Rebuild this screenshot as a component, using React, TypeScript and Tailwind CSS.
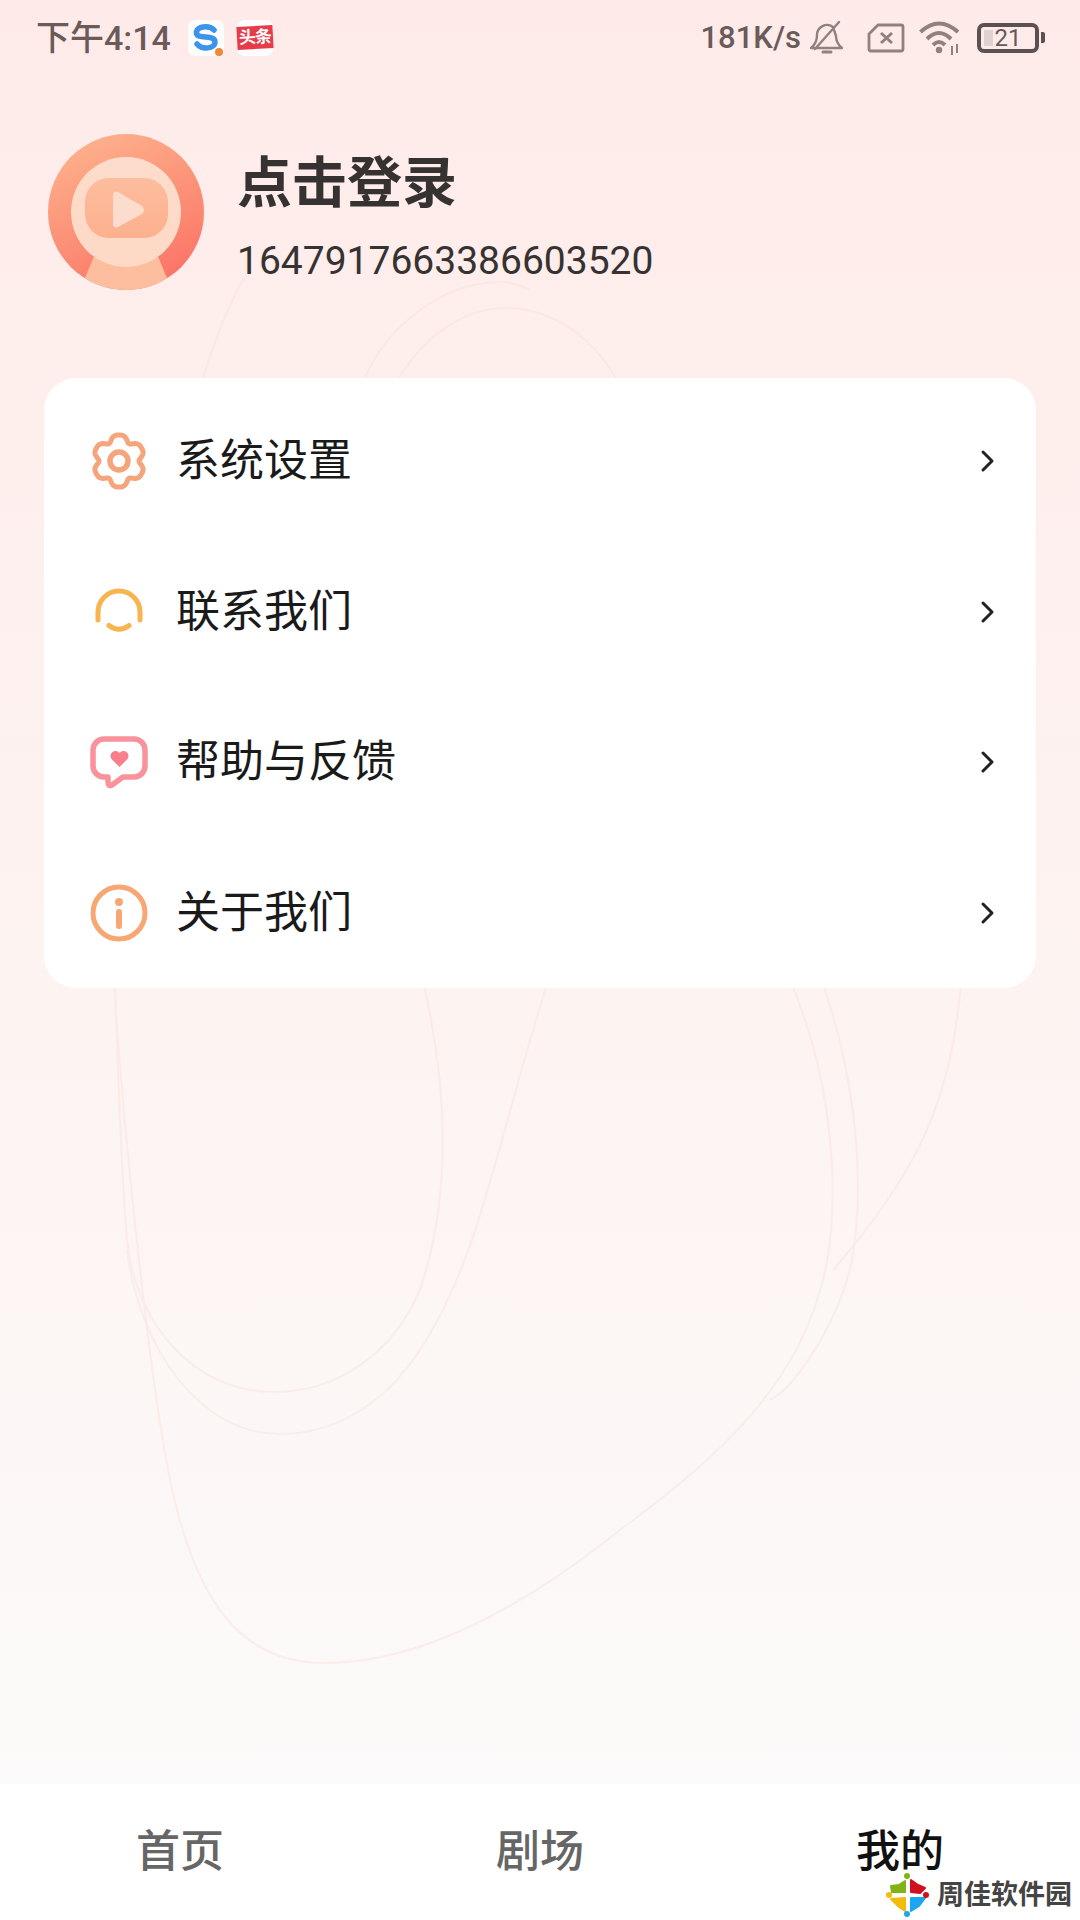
import React from "react";

const menuItems = [
  { label: "系统设置", icon: <GearIcon /> },
  { label: "联系我们", icon: <ServiceIcon /> },
  { label: "帮助与反馈", icon: <ChatHeartIcon /> },
  { label: "关于我们", icon: <InfoIcon /> },
];

// six lobed outline for the settings icon: wide lobes, narrow dents
function flowerPath() {
  const pts: string[] = [];
  for (let i = 0; i < 180; i++) {
    const a = (i / 180) * Math.PI * 2;
    const dent = (1 + Math.cos(6 * a)) / 2;
    const r = 26 - 6 * dent * dent;
    pts.push(`${(30 + r * Math.cos(a)).toFixed(2)} ${(30 + r * Math.sin(a)).toFixed(2)}`);
  }
  return "M" + pts.join("L") + "Z";
}

function GearIcon() {
  return (
    <svg width="60" height="60" viewBox="0 0 60 60" fill="none" stroke="#f5a47c" strokeWidth="5">
      <path d={flowerPath()} strokeLinejoin="round" />
      <circle cx="30" cy="30" r="9" strokeWidth="5.5" />
    </svg>
  );
}

function ServiceIcon() {
  return (
    <svg width="60" height="60" viewBox="0 0 60 60" fill="none" stroke="#f7b44f" strokeWidth="5" strokeLinecap="round">
      <path d="M9 38 V30 A21 21 0 0 1 51 30 V38" />
      <path d="M20 43.5 Q30 51 40 43.5" />
    </svg>
  );
}

function ChatHeartIcon() {
  return (
    <svg width="60" height="60" viewBox="0 0 60 60" fill="none">
      <path
        d="M15 7 H45 A11 11 0 0 1 56 18 V34 A11 11 0 0 1 45 45 H34 L23 53 Q19 55 19 50 V45 H15 A11 11 0 0 1 4 34 V18 A11 11 0 0 1 15 7 Z"
        stroke="#f9929b"
        strokeWidth="5.5"
        strokeLinejoin="round"
      />
      <path d="M30.5 35 L22.5 27 A5 5 0 0 1 30.5 21 A5 5 0 0 1 38.5 27 Z" fill="#f97f8b" />
    </svg>
  );
}

function InfoIcon() {
  return (
    <svg width="60" height="60" viewBox="0 0 60 60" fill="none" stroke="#f6a773">
      <circle cx="30" cy="30" r="26" strokeWidth="5" />
      <circle cx="30" cy="19" r="4" fill="#f6a773" stroke="none" />
      <path d="M30 29 V43" strokeWidth="6" strokeLinecap="round" />
    </svg>
  );
}

function Chevron() {
  return (
    <svg width="16" height="26" viewBox="0 0 16 26" fill="none" stroke="#222" strokeWidth="3" strokeLinecap="round" strokeLinejoin="round">
      <path d="M3 4 L12 13 L3 22" />
    </svg>
  );
}

function Avatar() {
  return (
    <svg width="156" height="156" viewBox="0 0 156 156">
      <defs>
        <linearGradient id="ring" x1="0.3" y1="0" x2="0.75" y2="1">
          <stop offset="0" stopColor="#fdb08c" />
          <stop offset="1" stopColor="#fb7264" />
        </linearGradient>
        <linearGradient id="head" x1="0" y1="0" x2="0" y2="1">
          <stop offset="0" stopColor="#fddccb" />
          <stop offset="1" stopColor="#fdd9c6" />
        </linearGradient>
        <linearGradient id="face" x1="0" y1="0" x2="0" y2="1">
          <stop offset="0" stopColor="#fdbd9f" />
          <stop offset="1" stopColor="#fdb08e" />
        </linearGradient>
        <clipPath id="disc">
          <circle cx="78" cy="78" r="78" />
        </clipPath>
      </defs>
      <circle cx="78" cy="78" r="78" fill="url(#ring)" />
      <g clipPath="url(#disc)">
        <path d="M47 120 H109 L124 156 H32 Z" fill="#fdbd9f" />
      </g>
      <circle cx="78" cy="78" r="55" fill="url(#head)" />
      <rect x="37" y="44" width="83" height="60" rx="24" fill="url(#face)" />
      <path d="M65 62 Q65 56 70 58 L94 72 Q98 76 94 80 L70 93 Q65 95 65 90 Z" fill="#fbdccd" />
    </svg>
  );
}

function SogouIcon() {
  return (
    <svg width="38" height="38" viewBox="0 0 38 38" fill="none">
      <rect x="1" y="1" width="36" height="36" rx="7" fill="#fdfdfd" />
      <path d="M27 11 C22 6 9 7 9.5 14 C10 21 28 15 28 23 C28 30 15 31 10 25" stroke="#3b93ea" strokeWidth="5.5" strokeLinecap="round" />
      <circle cx="32" cy="33" r="4" fill="#ec8a3c" />
    </svg>
  );
}

function BellOff() {
  return (
    <svg width="36" height="36" viewBox="0 0 36 36" fill="none" stroke="#92807f" strokeWidth="2.4" strokeLinecap="round" strokeLinejoin="round">
      <path d="M2 28 Q8 23 8 15 A10 10 0 0 1 24 7 L27 16 Q27 23 33 28 Z" />
      <path d="M6 29 L30 2" />
      <path d="M14 32 H22" strokeWidth="3" />
    </svg>
  );
}

function SimOff() {
  return (
    <svg width="38" height="30" viewBox="0 0 38 30" fill="none" stroke="#92807f" strokeWidth="2.8" strokeLinejoin="round">
      <path d="M11 2 H34 A2 2 0 0 1 36 4 V26 A2 2 0 0 1 34 28 H4 A2 2 0 0 1 2 26 V11 Z" />
      <path d="M14 10 L25 20 M25 10 L14 20" strokeWidth="3" />
    </svg>
  );
}

function Wifi() {
  return (
    <svg width="44" height="36" viewBox="0 0 44 36" fill="none" stroke="#92807f" strokeWidth="4">
      <path d="M1.5 12 Q20 -5 39 12" />
      <path d="M8 19 Q20 7 32 19" />
      <path d="M14 25 Q20 19 26 25" />
      <circle cx="20" cy="30" r="3.2" fill="#92807f" stroke="none" />
      <path d="M33 26 V35 M38 24 V33" strokeWidth="2" />
    </svg>
  );
}

function Battery() {
  return (
    <div className="flex items-center gap-[2px]">
      <div className="relative flex h-[30px] w-[62px] items-center justify-center rounded-[7px] border-[4px] border-[#5d5050]">
        <div className="absolute left-[3px] top-[3px] h-[16px] w-[9px] bg-[#dfd3d2]" />
        <span className="relative text-[24px] leading-none text-[#66595a]">21</span>
      </div>
      <div className="h-[11px] w-[4px] rounded-r-[2px] bg-[#5d5050]" />
    </div>
  );
}

function StatusBar() {
  return (
    <div className="flex h-[75px] items-center pl-[36px] pr-[35px] text-[#6a5a5a]">
      <span className="text-[34px] font-medium leading-none">下午4:14</span>
      <div className="ml-[16px] flex items-center gap-[12px]">
        <SogouIcon />
        <div className="flex h-[36px] w-[36px] items-center justify-center rounded-[7px] bg-[#fdfdfd]">
          <span className="flex h-[23px] w-[36px] -rotate-3 items-center justify-center bg-[#e63b48] text-[17px] font-bold leading-none tracking-[-1px] text-white">
            头条
          </span>
        </div>
      </div>
      <span className="ml-auto text-[31px] font-medium leading-none">181K/s</span>
      <div className="ml-[8px]">
        <BellOff />
      </div>
      <div className="ml-[22px]">
        <SimOff />
      </div>
      <div className="ml-[14px]">
        <Wifi />
      </div>
      <div className="ml-[14px]">
        <Battery />
      </div>
    </div>
  );
}

function PetalMark() {
  return (
    <svg width="44" height="44" viewBox="0 0 44 44" strokeLinejoin="round" strokeWidth="2">
      <path d="M19 8 L19 19 L6 19 L5 13 L13 12 Z" fill="#82b214" stroke="#82b214" />
      <path d="M25 7 L32 12 L39 15 L34 20 L25 19 Z" fill="#d0101c" stroke="#d0101c" />
      <path d="M5 26 L19 25 L19 38 L13 34 Z" fill="#f5bb0c" stroke="#f5bb0c" />
      <path d="M25 25 L39 25 L33 33 L25 38 Z" fill="#1aa6f0" stroke="#1aa6f0" />
      <circle cx="21" cy="3" r="3" fill="#82b214" />
      <circle cx="3" cy="22" r="3" fill="#f5bb0c" />
      <circle cx="40" cy="22" r="3" fill="#d0101c" />
      <circle cx="21" cy="41" r="3" fill="#1aa6f0" />
    </svg>
  );
}

export default function App() {
  return (
    <div
      className="relative flex h-[1920px] w-[1080px] flex-col overflow-hidden bg-gradient-to-b from-[#feebe9] via-[#fdf3f1] to-[#fbfbfb]"
      style={{ fontFamily: 'Roboto, "Noto Sans CJK SC", sans-serif' }}
    >
      {/* faint line art behind the page */}
      <svg className="absolute left-0 top-0" width="1080" height="1784" viewBox="0 0 1080 1784" fill="none" stroke="#fae4df" strokeWidth="2" opacity="0.5">
        <path d="M203 378 C215 340 230 300 246 275" />
        <path d="M365 378 C385 330 440 282 500 282 C510 282 520 285 530 290" />
        <path d="M399 378 C425 335 465 308 506 308 C550 308 590 335 616 378" />
        <path d="M424 985 C450 1100 450 1200 420 1290 C390 1360 330 1392 275 1392 C190 1392 135 1320 127 1240 C122 1180 118 1080 115 985" />
        <path d="M547 985 C500 1130 480 1260 420 1350 C380 1410 330 1434 280 1434 C200 1434 140 1350 127 1250" />
        <path d="M792 985 C840 1100 840 1230 820 1290 C790 1400 700 1470 620 1530 C520 1610 420 1663 324 1663 C240 1663 195 1600 170 1480 C150 1380 125 1150 114 985" />
        <path d="M823 985 C860 1090 865 1200 850 1270 C830 1340 790 1390 770 1400" />
        <path d="M961 985 C950 1100 920 1170 833 1270" />
      </svg>

      <div className="relative flex grow flex-col">
        <StatusBar />

        <div className="ml-[48px] mt-[59px] flex items-center">
          <Avatar />
          <div className="ml-[33px] flex flex-col pt-[10px]">
            <span className="text-[55px] font-bold leading-[66px] text-[#363232]">点击登录</span>
            <span className="mt-[22px] text-[39px] leading-[46px] text-[#363232]">1647917663386603520</span>
          </div>
        </div>

        <div className="mx-[44px] mt-[88px] flex flex-col rounded-[32px] bg-white pt-[8px]">
          {menuItems.map((item) => (
            <div key={item.label} className="flex h-[150.5px] items-center pl-[45px] pr-[40px]">
              {item.icon}
              <span className="ml-[27px] text-[44px] leading-none text-[#1a1a1a]">{item.label}</span>
              <div className="ml-auto">
                <Chevron />
              </div>
            </div>
          ))}
        </div>
      </div>

      <div className="relative grid h-[136px] grid-cols-3 items-center bg-white text-center text-[44px] font-medium leading-none">
        <span className="text-[#666666]">首页</span>
        <span className="text-[#666666]">剧场</span>
        <span className="text-[#111111]">我的</span>
      </div>

      {/* site watermark in the corner */}
      <div className="absolute bottom-[3px] right-[8px] flex items-center gap-[7px]">
        <PetalMark />
        <span className="text-[27px] font-bold leading-none text-[#444444]">周佳软件园</span>
      </div>
    </div>
  );
}
